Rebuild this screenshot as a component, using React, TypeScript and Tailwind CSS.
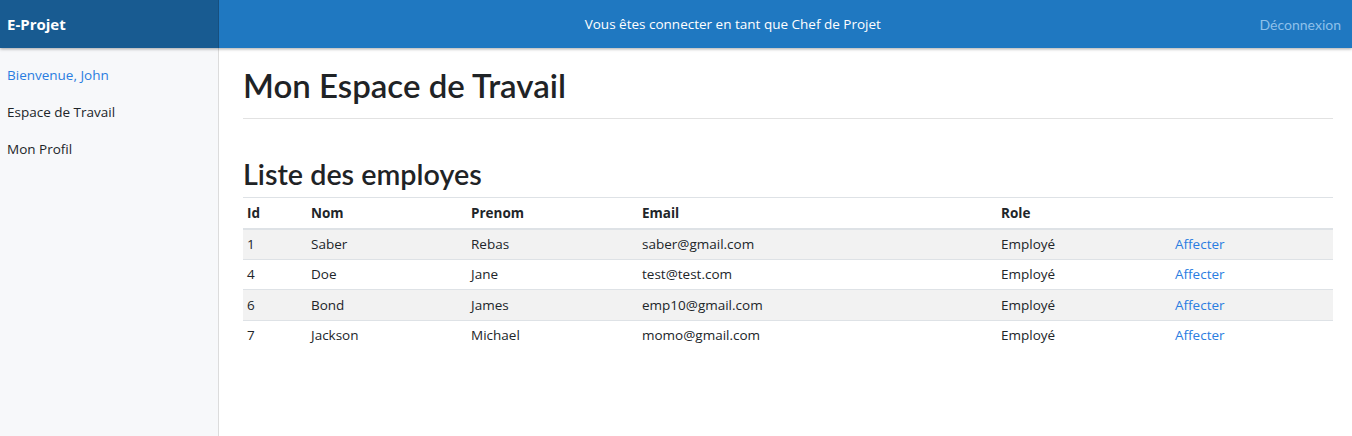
import React from "react";

const rows = [
  { id: 1, nom: "Saber", prenom: "Rebas", email: "saber@gmail.com" },
  { id: 4, nom: "Doe", prenom: "Jane", email: "test@test.com" },
  { id: 6, nom: "Bond", prenom: "James", email: "emp10@gmail.com" },
  { id: 7, nom: "Jackson", prenom: "Michael", email: "momo@gmail.com" },
];

export default function App() {
  return (
    <div className="w-[1352px] h-[436px] flex flex-col bg-white text-[#212529] overflow-hidden" style={{ fontFamily: '"Open Sans", "Noto Sans", sans-serif' }}>
      <header className="h-[48px] flex shrink-0 bg-[#1f78c1] shadow-[0_1px_3px_rgba(0,0,0,0.35)] relative z-10">
        <div className="w-[219px] bg-[#185b91] flex items-center pl-[7px] text-white font-bold text-[15px] border-r border-[#164f7e]">E-Projet</div>
        <div className="flex-1 flex items-center justify-center text-white text-[13.5px] pr-[13px]">Vous êtes connecter en tant que Chef de Projet</div>
        <div className="flex items-center pr-[11px] text-[#8ec0ea] text-[14px] font-['Lato',sans-serif]">Déconnexion</div>
      </header>
      <div className="flex flex-1">
        <aside className="w-[219px] bg-[#f7f8fa] border-r border-[#dcdcdc] pt-[17px] pl-[7px] flex flex-col gap-[17px] text-[13.5px]">
          <div className="text-[#2a7de1] h-[20px]">Bienvenue, John</div>
          <div className="h-[20px]">Espace de Travail</div>
          <div className="h-[20px]">Mon Profil</div>
        </aside>
        <main className="flex-1 pl-[24px] pr-[19px]">
          <h1 className="text-[33px] leading-[40px] pt-[17px] pb-[13px] border-b border-[#e2e2e2] font-semibold font-['Lato',sans-serif] text-[#1f2326]">Mon Espace de Travail</h1>
          <h2 className="text-[28.7px] leading-[34px] mt-[38px] mb-[6px] font-semibold font-['Lato',sans-serif] text-[#1f2326]">Liste des employes</h2>
          <table className="w-full text-[13.5px] border-collapse">
            <thead>
              <tr className="border-t border-[#dee2e6] border-b-2 h-[31px]">
                <th className="text-left font-bold pl-[4px] w-[64px]">Id</th>
                <th className="text-left font-bold pl-[4px] w-[160px]">Nom</th>
                <th className="text-left font-bold pl-[4px] w-[171px]">Prenom</th>
                <th className="text-left font-bold pl-[4px] w-[359px]">Email</th>
                <th className="text-left font-bold pl-[4px] w-[174px]">Role</th>
                <th></th>
              </tr>
            </thead>
            <tbody>
              {rows.map((r, i) => (
                <tr key={r.id} className={`h-[30.5px] border-b ${i % 2 === 0 ? "bg-[#f2f2f2]" : "bg-white"} ${i < 3 ? "border-[#dee2e6]" : "border-transparent"}`}>
                  <td className="pl-[4px]">{r.id}</td>
                  <td className="pl-[4px]">{r.nom}</td>
                  <td className="pl-[4px]">{r.prenom}</td>
                  <td className="pl-[4px]">{r.email}</td>
                  <td className="pl-[4px]">Employé</td>
                  <td className="pl-[4px] text-[#2a7de1]">Affecter</td>
                </tr>
              ))}
            </tbody>
          </table>
        </main>
      </div>
    </div>
  );
}
